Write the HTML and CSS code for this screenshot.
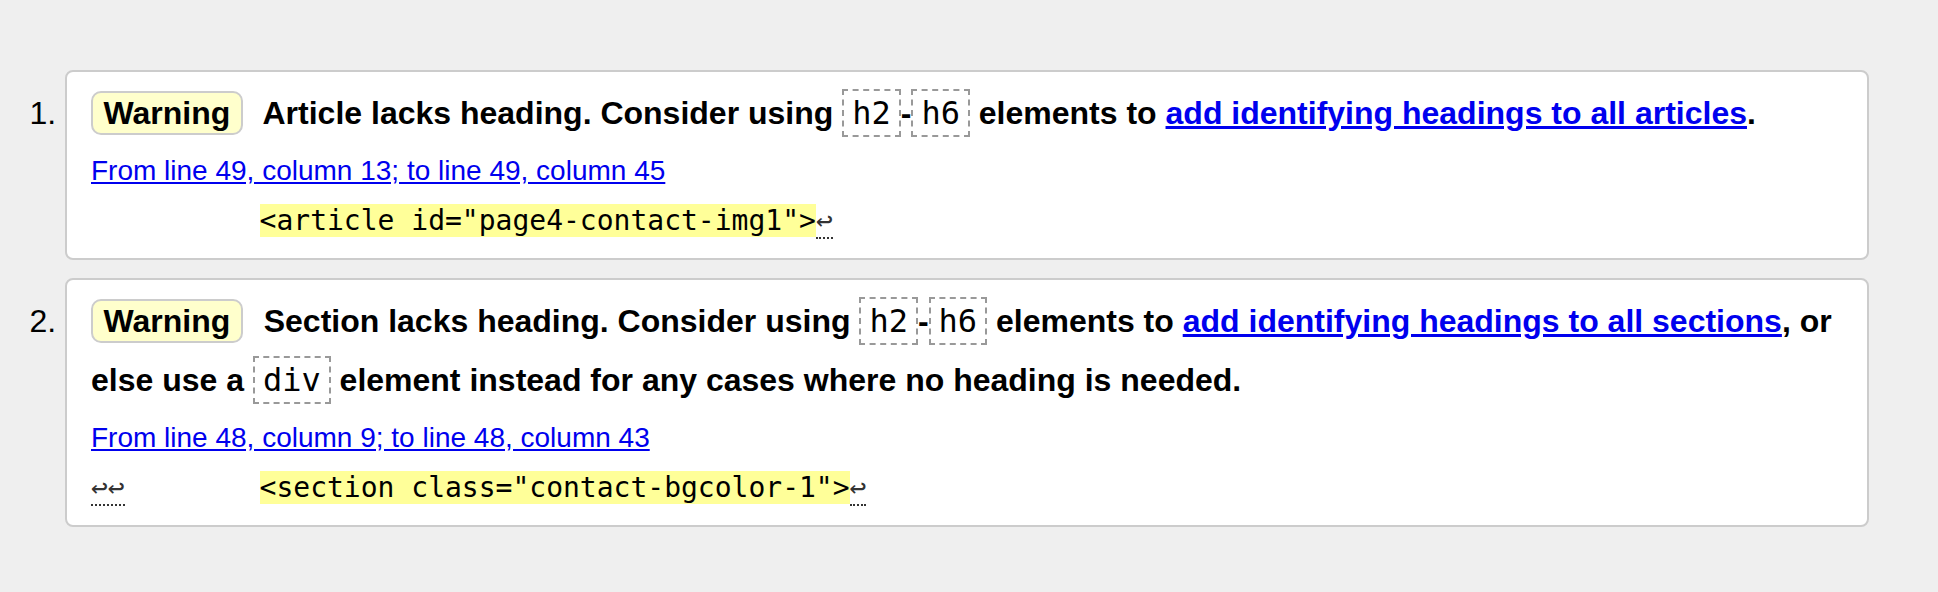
FILE: index.html
```html
<!DOCTYPE html>
<html lang="en">
<head>
<meta charset="utf-8">
<title>Validation results</title>
<link rel="stylesheet" href="styles.css">
</head>
<body>
<ol class="results">
  <li class="msg">
    <p class="message"><strong class="badge">Warning</strong> <span>Article lacks heading. Consider using <code>h2</code>-<code>h6</code> elements to <a href="#">add identifying headings to all articles</a>.</span></p>
    <p class="location"><a href="#">From line 49, column 13; to line 49, column 45</a></p>
    <p class="extract"><code>          <b>&lt;article id="page4-contact-img1"&gt;</b><span class="lf">↩</span></code></p>
  </li>
  <li class="msg">
    <p class="message"><strong class="badge">Warning</strong> <span>Section lacks heading. Consider using <code>h2</code>-<code>h6</code> elements to <a href="#">add identifying headings to all sections</a>, or else use a <code>div</code> element instead for any cases where no heading is needed.</span></p>
    <p class="location"><a href="#">From line 48, column 9; to line 48, column 43</a></p>
    <p class="extract"><code><span class="lf">↩↩</span>        <b>&lt;section class="contact-bgcolor-1"&gt;</b><span class="lf">↩</span></code></p>
  </li>
</ol>
</body>
</html>
```
FILE: styles.css
```css
html {
  background: #efefef;
}

body {
  margin: 0;
  background: #efefef;
  color: #000;
  font-family: "Liberation Sans", Arial, Helvetica, sans-serif;
}

.results {
  margin: 70px 69px 0 65px;
  padding: 0;
  font-size: 32px;
}

.msg {
  background: #fff;
  border: 2px solid #cccccc;
  border-radius: 8px;
  padding: 12px 24px 21px;
  margin-bottom: 18px;
}

.message {
  margin: 0;
  font-weight: bold;
  line-height: 59.5px;
}

.badge {
  display: inline-block;
  background: #ffffcc;
  border: 2px solid #cccccc;
  border-radius: 10px;
  padding: 3px 10.5px;
  line-height: 34px;
  margin-right: 12px;
}

.message code {
  font-family: "DejaVu Sans Mono", monospace;
  font-size: 32px;
  font-weight: normal;
  border: 2px dashed #999;
  padding: 3px 8px;
}

.message a {
  color: #0000ee;
}

.location {
  margin: 11px 0 0;
  font-size: 28px;
  line-height: 32px;
}

.location a {
  color: #0000ee;
}

.extract {
  margin: 17px 0 0;
  font-size: 28px;
  line-height: 33px;
}

.extract code {
  font-family: "DejaVu Sans Mono", monospace;
  font-size: 28px;
  white-space: pre;
}

.extract b {
  font-weight: normal;
  background: #ffff99;
}

.lf {
  color: #333;
  border-bottom: 2px dotted #333;
}
```
